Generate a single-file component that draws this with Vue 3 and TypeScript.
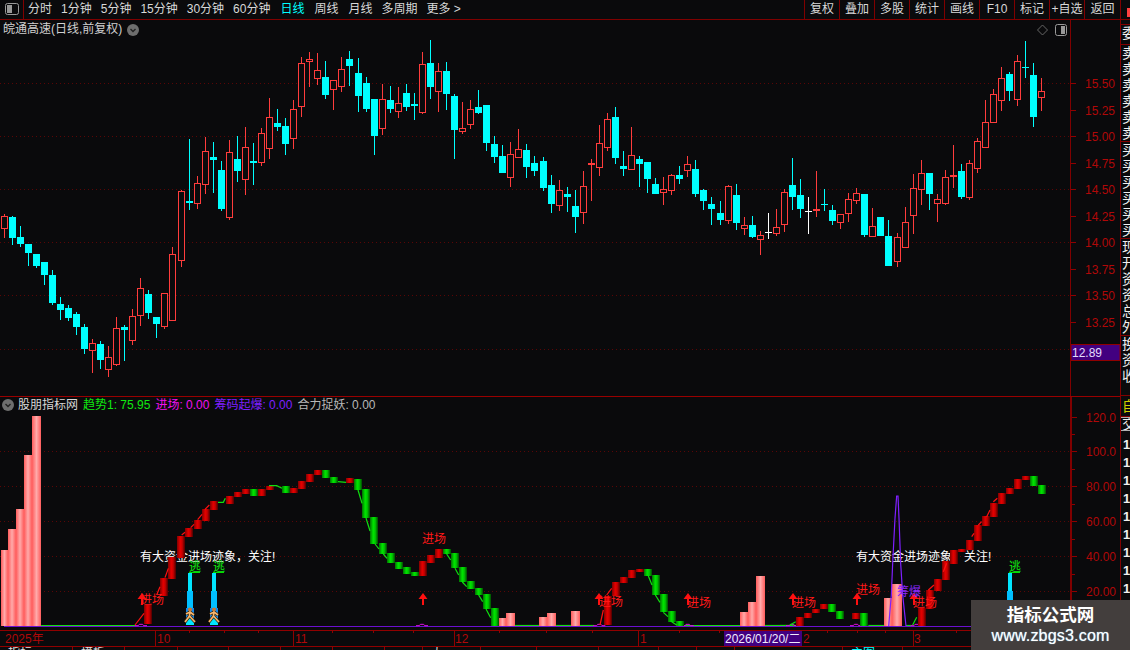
<script setup lang="ts">
type Kind = 'r' | 'c' | 'f' | 'w'
type Raw = [number, number, number, number, Kind]

const groupA: Raw[] = [
  [252,259,293,324,'r'],[258,261,324,345,'c'],[288,321,342,351,'c'],[342,342,369,408,'c'],[372,372,408,414,'c'],
  [396,396,435,465,'c'],[420,435,519,525,'c'],[501,522,540,570,'c'],[525,534,564,573,'c'],[546,552,591,615,'c'],
  [582,591,657,672,'c'],[627,640,659,729,'r'],[633,642,690,717,'c'],[648,682,716,741,'r'],[561,595,701,708,'r'],
  [585,591,600,693,'c'],[537,559,629,645,'r'],[444,475,554,588,'r'],[480,492,549,567,'c'],[561,561,582,624,'c'],
  [490,490,587,597,'r'],[351,373,569,569,'r'],[180,184,389,411,'r'],[27,213,219,240,'c'],[138,160,218,237,'r'],
  [21,64,161,192,'r'],[36,81,90,189,'c'],[93,120,237,243,'c'],[30,67,260,270,'r'],[18,87,123,156,'c']
]
const groupB: Raw[] = [
  [276,337,431,480,'r'],[324,378,384,450,'c'],[279,295,380,393,'r'],[189,247,338,372,'r'],[222,264,276,288,'c'],
  [249,273,327,360,'c'],[195,223,308,342,'r'],[66,85,212,246,'r'],[51,73,79,156,'r'],[54,106,128,150,'r'],
  [78,126,180,192,'c'],[136,136,161,225,'r'],[66,103,152,171,'r'],[48,72,93,153,'c'],[69,114,183,231,'c'],
  [126,144,222,231,'c'],[192,192,303,360,'c'],[147,193,278,300,'r'],[153,195,222,234,'c'],[156,205,227,249,'r'],
  [147,174,216,228,'c'],[174,207,213,255,'c'],[51,88,230,237,'r'],[15,84,156,192,'c'],[84,109,167,231,'r'],
  [81,108,177,225,'c'],[177,183,285,372,'c'],[201,280,287,297,'r'],[195,223,266,282,'r'],[165,216,234,237,'c'],
  [210,210,324,348,'c'],[303,327,366,384,'c'],[330,363,414,414,'c'],[321,358,425,456,'r'],[282,343,365,369,'r'],
  [327,345,396,429,'c'],[363,384,408,423,'c'],[366,378,459,468,'c'],[420,450,507,534,'c']
]
const groupC: Raw[] = [
  [240,271,316,333,'r'],[261,282,291,336,'c'],[270,318,351,399,'c'],[213,259,335,372,'r'],[177,189,195,303,'f'],
  [75,130,200,228,'r'],[39,58,140,153,'r'],[21,51,174,192,'c'],[153,198,207,228,'c'],[81,166,206,207,'r'],
  [168,177,192,261,'c'],[186,186,237,279,'c'],[234,252,282,282,'c'],[231,268,275,315,'r'],[222,226,269,285,'r'],
  [198,225,237,252,'c'],[168,193,209,231,'r'],[180,207,282,291,'c'],[267,270,303,330,'c'],[291,312,327,375,'c'],
  [303,339,360,375,'c'],[255,259,359,372,'r'],[252,285,369,390,'c'],[351,376,383,405,'r'],[348,375,411,414,'c'],
  [393,406,416,465,'r'],[339,396,399,417,'w'],[327,382,398,408,'r'],[267,277,371,396,'r'],[174,255,291,330,'c'],
  [237,285,327,354,'c'],[291,333,336,402,'w'],[213,327,333,351,'f'],[267,312,315,333,'c'],[315,330,363,375,'c'],
  [343,343,365,387,'r'],[279,298,338,366,'r'],[264,280,299,312,'r'],[282,282,405,411,'c'],[324,379,407,408,'r'],
  [351,351,408,408,'c'],[360,408,498,498,'c'],[399,412,482,501,'r'],[321,367,440,441,'r'],[222,265,344,402,'r'],
  [180,220,266,315,'r'],[219,219,282,330,'c'],[282,298,308,366,'r'],[210,232,308,315,'r']
]
const groupD: Raw[] = [
  [435,525,530,565,'f'],[492,513,590,597,'c'],[480,490,592,600,'r'],[414,424,505,518,'r'],[300,367,440,440,'r'],
  [267,283,365,369,'r'],[201,235,301,333,'r'],[216,222,272,303,'c'],[165,184,298,318,'r'],[123,201,204,234,'c'],
  [189,225,350,381,'c'],[234,274,290,333,'r']
]

const colourOf: Record<Kind, string> = { r: '#ff3c3c', f: '#ff3c3c', c: '#00ffff', w: '#ffffff' }
const raws: { raw: Raw; off: number }[] = [
  ...groupA.map((raw) => ({ raw, off: 130 })),
  ...groupB.map((raw) => ({ raw, off: 35 })),
  ...groupC.map((raw) => ({ raw, off: 100 })),
  ...groupD.map((raw) => ({ raw, off: 0 }))
]
const candles = raws.map(({ raw, off }, i) => {
  const wx = 4 + 8 * i + Math.floor((i + 1.01) / 22.4)
  const py = (z: number) => Math.round(off + z / 3)
  const top = py(raw[1])
  const hi = Math.min(py(raw[0]), top)
  const bodyH = Math.max(1, py(raw[2]) - top)
  const lo = Math.max(py(raw[3]), top + bodyH)
  return { i, wx, hi, lo, top, bodyH, kind: raw[4], colour: colourOf[raw[4]] }
})

const priceGrid = [83, 136, 189, 242, 295, 349]
const priceTicks = [
  { y: 83, t: '15.50' }, { y: 110, t: '15.25' }, { y: 136, t: '15.00' }, { y: 163, t: '14.75' }, { y: 189, t: '14.50' },
  { y: 216, t: '14.25' }, { y: 242, t: '14.00' }, { y: 269, t: '13.75' }, { y: 295, t: '13.50' }, { y: 322, t: '13.25' }
]

const tabs = [
  { t: '分时' }, { t: '1分钟' }, { t: '5分钟' }, { t: '15分钟' }, { t: '30分钟' }, { t: '60分钟' },
  { t: '日线', on: true, spaced: true }, { t: '周线', spaced: true }, { t: '月线', spaced: true }, { t: '多周期' }, { t: '更多 >' }
]
const tools = ['复权', '叠加', '多股', '统计', '画线', 'F10', '标记', '+自选', '返回']

const indGrid = [451, 486, 521, 556, 591]
const indLabels = [
  { y: 417, t: '120.0' }, { y: 451, t: '100.0' }, { y: 486, t: '80.00' }, { y: 521, t: '60.00' }, { y: 556, t: '40.00' }, { y: 591, t: '20.00' }
]
const indMinor = [434, 469, 504, 539, 574, 609]

const pinkRaw: [number, number, number][] = [
  [1, 8, 550], [8, 16, 529], [16, 24, 509], [24, 32, 455], [32, 41, 416],
  [499, 506, 618], [506, 515, 613], [539, 547, 617], [547, 556, 613], [571, 580, 611],
  [740, 748, 612], [748, 756, 602], [756, 765, 576], [884, 892, 598], [892, 902, 584]
]
const pink = pinkRaw.map(([a, b, top]) => ({ x: a, w: b - a, y: top, h: 626 - top }))

type Col = [number, number, number, 'r' | 'g']
const c5: Col[] = [
  [432,630,687,'r'],[480,549,603,'r'],[504,487,552,'r'],[530,423,489,'r'],[555,399,426,'r'],[582,375,402,'r'],
  [606,342,378,'r'],[630,318,345,'r'],[678,303,327,'r'],[702,291,306,'r'],[726,282,297,'r'],[750,282,303,'g'],
  [774,282,303,'r'],[798,273,285,'r'],[846,273,294,'g'],[870,279,294,'r'],[894,258,282,'r'],[918,237,261,'r'],
  [942,225,240,'r'],[966,225,249,'g'],[990,246,264,'g'],[1038,249,264,'r'],[1062,252,285,'g'],[1086,282,369,'g'],
  [1110,366,447,'g'],[1137,444,477,'g'],[1161,474,504,'g'],[1185,501,522,'g']
]
const c6: Col[] = [
  [8,516,537,'g'],[32,531,543,'g'],[56,498,543,'r'],[80,480,504,'r'],[104,462,489,'r'],[128,462,477,'g'],
  [152,474,519,'g'],[176,516,561,'g'],[200,558,582,'g'],[224,579,600,'g'],[248,597,642,'g'],[272,639,693,'g'],
  [612,603,690,'r'],[636,561,603,'r'],[660,546,564,'r'],[684,525,549,'r'],[708,522,531,'r'],[732,522,543,'g'],
  [756,540,600,'g'],[780,597,651,'g'],[804,648,681,'g'],[828,678,693,'g']
]
const c7: Col[] = [
  [48,666,693,'r'],[72,654,669,'r'],[96,642,654,'r'],[120,627,642,'r'],[144,627,651,'g'],[168,648,672,'g'],
  [216,654,672,'r'],[240,654,693,'g'],[414,639,693,'r'],[438,585,642,'r'],[462,552,588,'r'],[486,498,555,'r'],
  [510,465,507,'r'],[534,462,471,'r'],[558,435,465,'r'],[582,390,438,'r'],[606,363,393,'r'],[630,324,366,'r'],
  [654,294,327,'r'],[678,279,297,'r'],[702,252,282,'r'],[726,243,255,'r'],[750,243,273,'g'],[774,270,297,'g']
]
const toCols = (list: Col[], xoff: number) =>
  list.map(([zx, a, b, c]) => ({
    x: Math.round(zx / 3 + xoff),
    y: Math.round(a / 3 + 395),
    h: Math.round(b / 3 + 395) - Math.round(a / 3 + 395),
    c
  }))
const trendCols = [...toCols(c5, 0), ...toCols(c6, 400), ...toCols(c7, 780)]

const zp = (pts: number[], xoff: number) => {
  const out: string[] = []
  for (let i = 0; i < pts.length; i += 2) out.push(`${pts[i] / 3 + xoff},${pts[i + 1] / 3 + 395}`)
  return out.join(' ')
}
const redThin = [
  zp([405,690,432,655], 0), zp([470,600,480,575], 0), zp([495,548,505,520], 0), zp([545,420,555,412], 0),
  zp([572,398,582,388], 0), zp([593,374,606,358], 0), zp([615,343,628,330], 0),
  zp([600,690,610,645], 400), zp([620,600,635,580], 400),
  zp([445,585,462,570], 780), zp([490,530,500,505], 780), zp([575,425,582,415], 780), zp([595,390,605,380], 780),
  zp([620,365,630,345], 780), zp([640,320,652,310], 780)
]
const greenThin = [
  zp([654,322,670,322,676,310], 0), zp([807,272,830,272,846,280], 0), zp([1014,260,1038,262], 0),
  zp([1074,285,1086,325], 0), zp([1098,369,1110,408], 0), zp([1125,447,1137,462], 0), zp([1150,477,1161,490], 0),
  zp([140,477,152,495], 400), zp([165,520,176,540], 400), zp([187,561,200,575], 400), zp([236,600,248,620], 400),
  zp([258,642,272,668], 400), zp([745,543,756,570], 400), zp([766,600,780,622], 400), zp([790,652,804,665], 400),
  zp([815,680,830,690], 400), zp([30,690,47,680], 780), zp([398,690,410,667], 780)
]
const greenBase = [
  zp([123,691.5,405,691.5], 0), zp([345,691.5,417,691.5], 400), zp([468,691.5,513,691.5], 400), zp([540,691.5,582,691.5], 400),
  zp([855,691.5,1020,691.5], 400), zp([1095,691.5,1170,691.5], 400), zp([0,691.5,50,691.5], 780), zp([265,691.5,312,691.5], 780),
  zp([378,691.5,395,691.5], 780)
]
const bump = (z: number, xoff: number) => zp([z, 692, z + 10, 692, z + 13, 688, z + 23, 688, z + 26, 692, z + 36, 692], xoff)
const bumps = [bump(405, 0), bump(48, 400), bump(580, 400), bump(845, 400), bump(1158, 400), bump(210, 780), bump(392, 780)]
const spikeLine = zp([326,693,334,600,338,505,345,370,350,303,354,303,357,370,362,505,368,600,378,693], 780)

const arrows = [142, 423, 599, 688, 793, 857, 914].map((x) =>
  `${x},593 ${x + 4.5},599 ${x + 1},599 ${x + 1},605 ${x - 1},605 ${x - 1},599 ${x - 4.5},599`
)
const enters = [
  { x: 140, y: 604 }, { x: 422, y: 543 }, { x: 599, y: 606 }, { x: 687, y: 607 },
  { x: 792, y: 607 }, { x: 856, y: 594 }, { x: 913, y: 607 }
]
const spikes = [188, 212]

const majorTicks = [155, 293, 454, 638, 913]
const minorTicks = [189, 224, 258, 332, 373, 413, 499, 546, 592, 679, 719, 827, 857, 885, 956, 1000, 1040]
const dateLabels = [
  { x: 157, t: '10' }, { x: 295, t: '11' }, { x: 455, t: '12' }, { x: 640, t: '1' }, { x: 803, t: '2' }, { x: 914, t: '3' }
]

const sideBlocks = [
  { h: 5, rows: [] as string[], cls: '' },
  { h: 20, rows: ['委比'], cls: '' },
  { h: 97, rows: ['卖五', '卖四', '卖三', '卖二', '卖一', '卖'], cls: '' },
  { h: 97, rows: ['买一', '买二', '买三', '买四', '买五', '买'], cls: '' },
  { h: 97, rows: ['现价', '开盘', '资金', '资产', '总量', '外盘'], cls: '' },
  { h: 60, rows: ['换手', '资金', '收益'], cls: '' },
  { h: 21, rows: ['自选'], cls: 'gold' },
  { h: 14, rows: ['交易'], cls: 'small' },
  { h: 200, rows: ['1', '1', '1', '1', '1', '1', '1', '1', '1', '1', '1'], cls: 'ones' }
]

const bottomTabs = [
  { w: 73, t: '指标' }, { w: 52, t: '模板' }, { w: 53, t: '' }, { w: 51, t: '' }, { w: 52, t: '' }, { w: 52, t: '' },
  { w: 52, t: '' }, { w: 38, t: '' }, { w: 58, t: '大' }, { w: 56, t: '' }, { w: 62, t: '' }, { w: 60, t: '' },
  { w: 38, t: '' }, { w: 38, t: '' }, { w: 108, t: '' }, { w: 60, t: '主图', on: true }
]
</script>

<template>
  <div class="terminal">
    <header class="topbar">
      <button class="panel-btn" type="button">
        <svg width="14" height="12" viewBox="0 0 14 12">
          <rect x="0.5" y="0.5" width="13" height="11" rx="2" fill="none" stroke="#999" />
          <rect x="2" y="2" width="5" height="8" fill="#999" />
        </svg>
      </button>
      <nav class="tabs">
        <span v-for="t in tabs" :key="t.t" class="tab" :class="{ on: t.on, spaced: t.spaced }">{{ t.t }}</span>
      </nav>
      <div class="tools">
        <span v-for="t in tools" :key="t" class="tool">{{ t }}</span>
      </div>
      <span class="alert"></span>
    </header>

    <div class="body">
      <main class="main-col">
        <section class="pane price">
          <svg class="chart" width="1070" height="376" viewBox="0 20 1070 376">
            <line v-for="y in priceGrid" :key="y" x1="0" x2="1070" :y1="y + 0.5" :y2="y + 0.5" class="grid" />
            <g v-for="c in candles" :key="c.i" shape-rendering="crispEdges">
              <rect :x="c.wx" :y="c.hi" width="1" :height="c.lo - c.hi" :fill="c.colour" />
              <rect v-if="c.kind === 'r'" :x="c.wx - 2.5" :y="c.top + 0.5" width="6" :height="Math.max(c.bodyH, 2)" fill="#0a0a0c" :stroke="c.colour" />
              <rect v-else :x="c.wx - 3" :y="c.top" width="7" :height="c.bodyH" :fill="c.colour" />
            </g>
            <polygon points="1042.5,25 1047.5,30 1042.5,35 1037.5,30" fill="none" stroke="#666" />
            <rect x="1055.5" y="24.5" width="11" height="11" rx="2" fill="none" stroke="#999" />
            <rect x="1061" y="26" width="4" height="8" fill="#999" />
          </svg>
          <svg class="axis" width="49" height="376" viewBox="1071 20 49 376">
            <g v-for="t in priceTicks" :key="t.t">
              <line x1="1071" x2="1076" :y1="t.y + 0.5" :y2="t.y + 0.5" class="tick" />
              <text x="1085" :y="t.y + 5" class="ax-text">{{ t.t }}</text>
            </g>
            <rect x="1071" y="344.5" width="49" height="16" fill="#420080" stroke="#900000" />
            <text x="1072" y="357" class="tag-text">12.89</text>
          </svg>
          <div class="title">
            <span>皖通高速(日线,前复权)</span>
            <svg width="12" height="12" viewBox="0 0 12 12">
              <circle cx="6" cy="6" r="6" fill="#6e6e6e" />
              <path d="M3.5 5 L6 7.5 L8.5 5" fill="none" stroke="#222" stroke-width="1.4" />
            </svg>
          </div>
        </section>

        <section class="pane indicator">
          <svg class="chart" width="1070" height="233" viewBox="0 397 1070 233">
            <defs>
              <linearGradient id="pinkGrad" x1="0" x2="1" y1="0" y2="0">
                <stop offset="0" stop-color="#ff5c5c" />
                <stop offset="0.5" stop-color="#ffaaaa" />
                <stop offset="1" stop-color="#ff5c5c" />
              </linearGradient>
              <linearGradient id="redGrad" x1="0" x2="1" y1="0" y2="0">
                <stop offset="0" stop-color="#800000" />
                <stop offset="0.4" stop-color="#e60000" />
                <stop offset="0.65" stop-color="#c80000" />
                <stop offset="1" stop-color="#4a0000" />
              </linearGradient>
              <linearGradient id="greenGrad" x1="0" x2="1" y1="0" y2="0">
                <stop offset="0" stop-color="#007000" />
                <stop offset="0.4" stop-color="#00e600" />
                <stop offset="0.65" stop-color="#00c800" />
                <stop offset="1" stop-color="#004a00" />
              </linearGradient>
            </defs>
            <line v-for="y in indGrid" :key="y" x1="0" x2="1070" :y1="y + 0.5" :y2="y + 0.5" class="grid" />
            <text x="140" y="561" class="notice">有大资金进场迹象，关注!</text>
            <text x="856" y="561" class="notice">有大资金进场迹象，关注!</text>

            <rect v-for="b in pink" :key="b.x" :x="b.x" :y="b.y" :width="b.w" :height="b.h" fill="url(#pinkGrad)" shape-rendering="crispEdges" />

            <polyline v-for="(p, i) in greenBase" :key="'gb' + i" :points="p" class="thin-green" />
            <line x1="4" x2="1070" y1="626.5" y2="626.5" class="base" />
            <polyline v-for="(p, i) in bumps" :key="'bp' + i" :points="p" class="bump" />
            <polyline :points="spikeLine" class="spike-line" />

            <g v-for="x in spikes" :key="x" shape-rendering="crispEdges">
              <rect :x="x" y="573" width="4" height="52" fill="#00e5ff" />
              <rect :x="x - 1" y="591" width="6" height="20" fill="#00bfff" />
              <rect :x="x - 2" y="608" width="8" height="10" fill="#1688e8" />
              <rect :x="x - 2" y="618" width="8" height="7" fill="#00e5ff" />
            </g>
            <g v-for="x in spikes" :key="'run' + x" :transform="`translate(${x + 2} 608)`">
              <path d="M0 3 L-0.5 8 M-4 6 L0 4 L4 7 M-0.5 8 L-5 14 M-0.5 8 L5 14" fill="none" stroke="#3a2200" stroke-width="3" />
              <path d="M0 3 L-0.5 8 M-4 6 L0 4 L4 7 M-0.5 8 L-5 14 M-0.5 8 L5 14" fill="none" stroke="#f5b672" stroke-width="1.7" />
              <circle cx="0" cy="1.5" r="2" fill="#c87830" />
            </g>
            <rect x="1008" y="573" width="4" height="28" fill="#00e5ff" shape-rendering="crispEdges" />
            <rect x="1007" y="591" width="6" height="10" fill="#00bfff" shape-rendering="crispEdges" />

            <rect
              v-for="(c, i) in trendCols" :key="'tc' + i" :x="c.x" :y="c.y" width="8" :height="c.h"
              :fill="c.c === 'r' ? 'url(#redGrad)' : 'url(#greenGrad)'" shape-rendering="crispEdges"
            />
            <polyline v-for="(p, i) in redThin" :key="'rt' + i" :points="p" class="thin-red" />
            <polyline v-for="(p, i) in greenThin" :key="'gt' + i" :points="p" class="thin-green" />

            <polygon v-for="(p, i) in arrows" :key="'ar' + i" :points="p" fill="#ff1010" />
            <text v-for="(e, i) in enters" :key="'en' + i" :x="e.x" :y="e.y" class="enter">进场</text>
            <text x="189" y="571" class="escape">逃</text>
            <text x="213" y="571" class="escape">逃</text>
            <text x="1009" y="571" class="escape">逃</text>
            <rect x="189" y="572" width="11" height="1" fill="#00e000" />
            <rect x="213" y="572" width="11" height="1" fill="#00e000" />
            <rect x="1009" y="572" width="11" height="1" fill="#00e000" />
            <text x="897" y="596" class="chip">筹爆</text>
          </svg>
          <svg class="axis wide" width="48" height="233" viewBox="1072 397 48 233">
            <line v-for="y in indMinor" :key="y" x1="1072" x2="1075" :y1="y + 0.5" :y2="y + 0.5" class="tick" />
            <g v-for="t in indLabels" :key="t.t">
              <line x1="1072" x2="1077" :y1="t.y + 0.5" :y2="t.y + 0.5" class="tick" />
              <text x="1086" :y="t.y + 5" class="ax-text">{{ t.t }}</text>
            </g>
          </svg>
          <div class="ind-title">
            <svg width="12" height="12" viewBox="0 0 12 12">
              <circle cx="6" cy="6" r="6" fill="#6e6e6e" />
              <path d="M3.5 5 L6 7.5 L8.5 5" fill="none" stroke="#222" stroke-width="1.4" />
            </svg>
            <span class="name">股朋指标网</span>
            <span class="green">趋势1: 75.95</span>
            <span class="magenta">进场: 0.00</span>
            <span class="purple">筹码起爆: 0.00</span>
            <span class="grey">合力捉妖: 0.00</span>
          </div>
        </section>

        <div class="date-axis">
          <svg width="1070" height="15" viewBox="0 631 1070 15">
            <rect v-for="x in majorTicks" :key="x" :x="x" y="631" width="1" height="15" fill="#900000" />
            <rect v-for="x in minorTicks" :key="x" :x="x" y="631" width="1" height="2" fill="#900000" />
            <text x="5" y="643" class="ax-text">2025年</text>
            <text v-for="d in dateLabels" :key="d.t" :x="d.x" y="643" class="ax-text">{{ d.t }}</text>
            <rect x="724" y="631" width="78" height="15" fill="#420080" />
            <text x="725" y="643" class="date-text">2026/01/20/二</text>
          </svg>
        </div>
        <div class="bottom-tabs">
          <span v-for="(b, i) in bottomTabs" :key="i" class="btab" :class="{ on: b.on }" :style="{ width: b.w + 'px' }">{{ b.t }}</span>
        </div>
      </main>

      <aside class="side">
        <div v-for="(b, i) in sideBlocks" :key="i" class="side-block" :class="b.cls" :style="{ height: b.h + 'px' }">
          <span v-for="(r, j) in b.rows" :key="j" class="side-row">{{ r }}</span>
        </div>
      </aside>
    </div>

    <div class="watermark">
      <strong>指标公式网</strong>
      <span>www.zbgs3.com</span>
    </div>
  </div>
</template>

<style scoped>
.terminal {
  position: relative;
  width: 1130px;
  height: 650px;
  overflow: hidden;
  background: #0a0a0c;
  font-family: "Liberation Sans", "Noto Sans CJK SC", sans-serif;
  font-size: 12px;
  color: #d8d8d8;
}
.topbar {
  display: flex;
  height: 20px;
  box-sizing: border-box;
  border-bottom: 1px solid #800000;
  line-height: 19px;
}
.panel-btn {
  width: 24px;
  padding: 0 0 1px;
  background: none;
  border: 0;
  border-right: 1px solid #800000;
  display: flex;
  align-items: center;
  justify-content: center;
}
.tabs {
  display: flex;
  gap: 9px;
  margin-left: 4px;
  flex: 1;
}
.tab.on {
  color: #00ffff;
}
.tab.spaced {
  margin-left: 1px;
}
.tools {
  display: flex;
}
.tool {
  width: 35px;
  box-sizing: border-box;
  text-align: center;
  border-left: 1px solid #800000;
}
.tool:last-child {
  width: 36px;
}
.alert {
  width: 10px;
  box-sizing: border-box;
  border-left: 1px solid #800000;
  position: relative;
  overflow: hidden;
}
.alert::after {
  content: "";
  position: absolute;
  left: 6px;
  top: 8px;
  width: 6px;
  height: 9px;
  background: #ff4040;
}
.body {
  display: flex;
  height: 630px;
}
.main-col {
  width: 1121px;
  box-sizing: border-box;
  border-right: 1px solid #800000;
  flex: none;
}
.pane {
  position: relative;
  display: flex;
}
.price {
  height: 377px;
  box-sizing: border-box;
  border-bottom: 1px solid #990000;
}
.indicator {
  height: 233px;
}
.chart {
  display: block;
  flex: none;
}
.axis {
  display: block;
  flex: none;
  border-left: 1px solid #800000;
}
.axis.wide {
  border-left-width: 2px;
}
.grid {
  stroke: #5a0606;
  stroke-dasharray: 1 3;
}
.tick {
  stroke: #900000;
}
.ax-text {
  fill: #b00808;
  font-size: 12px;
}
.tag-text {
  fill: #e4dcff;
  font-size: 12px;
}
.title {
  position: absolute;
  left: 3px;
  top: 1px;
  display: flex;
  align-items: center;
  gap: 5px;
  line-height: 17px;
  color: #d0d0d0;
}
.ind-title {
  position: absolute;
  left: 2px;
  top: 0;
  display: flex;
  align-items: center;
  gap: 5px;
  height: 16px;
  line-height: 16px;
}
.ind-title .name {
  margin-left: -1px;
  color: #d8d8d8;
}
.green {
  color: #10e810;
}
.magenta {
  color: #f010f0;
}
.purple {
  color: #7f20ff;
}
.grey {
  color: #b8b8b8;
}
.notice {
  fill: #ffffff;
  font-size: 12px;
}
.base {
  stroke: #6a10d0;
  stroke-width: 1;
}
.bump {
  fill: none;
  stroke: #e010e0;
}
.thin-red {
  fill: none;
  stroke: #ff1010;
  stroke-width: 1.2;
}
.thin-green {
  fill: none;
  stroke: #10e010;
  stroke-width: 1.2;
}
.spike-line {
  fill: none;
  stroke: #7f20ff;
  stroke-width: 1.2;
}
.enter {
  fill: #ff1818;
  font-size: 12px;
}
.escape {
  fill: #10ee10;
  font-size: 12px;
}
.chip {
  fill: #8a28ff;
  font-size: 12px;
}
.date-axis {
  height: 17px;
  box-sizing: border-box;
  border-top: 1px solid #900000;
  border-bottom: 1px solid #900000;
}
.date-axis svg {
  display: block;
}
.date-text {
  fill: #f0ecff;
  font-size: 12px;
}
.bottom-tabs {
  display: flex;
  height: 3px;
  overflow: hidden;
}
.btab {
  flex: none;
  box-sizing: border-box;
  border-right: 1px solid #900000;
  padding-left: 8px;
  line-height: 12px;
  color: #e0e0e0;
}
.btab.on {
  color: #00ffff;
}
.side {
  flex: 1;
  overflow: hidden;
  line-height: 16px;
  font-size: 14px;
  color: #f0f0f0;
}
.side-block {
  box-sizing: border-box;
  border-bottom: 1px solid #800000;
  overflow: hidden;
}
.side-row {
  display: block;
  height: 16px;
  padding-left: 1px;
  white-space: nowrap;
}
.side-block.gold {
  color: #d0d000;
  padding-top: 2px;
}
.side-block.small {
  border-bottom: 1px solid #b0b0b0;
  border-top: 1px solid #b0b0b0;
  line-height: 12px;
}
.side-block.small .side-row {
  height: 12px;
}
.side-block.ones {
  border-bottom: 0;
  font-weight: 700;
  font-size: 13px;
  padding-top: 6px;
}
.side-block.ones .side-row {
  height: 18px;
  padding-left: 2px;
}
.watermark {
  position: absolute;
  right: 0;
  bottom: 0;
  width: 159px;
  height: 50px;
  box-sizing: border-box;
  padding-bottom: 3px;
  background: #433e3d;
  display: flex;
  flex-direction: column;
  align-items: center;
  justify-content: center;
  color: #fff;
}
.watermark strong {
  font-family: "Noto Sans CJK SC", sans-serif;
  font-size: 17.5px;
  line-height: 24px;
  font-weight: 700;
}
.watermark span {
  font-size: 16px;
  line-height: 19px;
  letter-spacing: 0.2px;
  text-shadow: 0 0 1px #8fdcff;
}
</style>

<style>
html,
body {
  margin: 0;
  background: #0a0a0c;
  overflow: hidden;
}
</style>
